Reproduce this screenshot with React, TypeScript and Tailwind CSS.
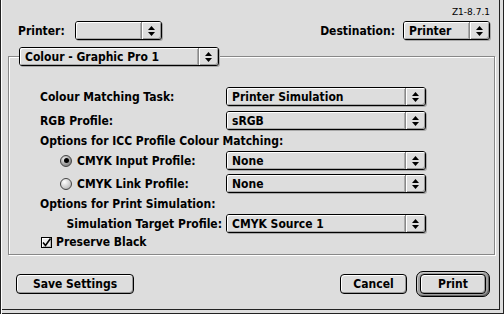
import React from 'react';

const font = "font-['DejaVu_Sans_Condensed','DejaVu_Sans',sans-serif]";

const Arrows: React.FC = () => (
    <svg width="7" height="10" viewBox="0 0 7 10" className="block">
        <polygon points="3.5,0 7,4 0,4" fill="#000" />
        <polygon points="0,6 7,6 3.5,10" fill="#000" />
    </svg>
);

interface PopupProps {
    label?: string;
    className: string;
}

const Popup: React.FC<PopupProps> = ({ label, className }) => (
    <div className={`flex h-[19px] shrink-0 rounded-[3px] border border-black bg-[#dddddd] shadow-[1px_1px_0_#a8a8a8] ${className}`}>
        <div className="flex flex-1 items-center rounded-l-[2px] pl-[5px] text-[12px] font-bold leading-none text-black shadow-[inset_1px_1px_0_#fff,inset_-1px_-1px_0_#aaa]">
            {label}
        </div>
        <div className="flex w-[20px] items-center justify-center rounded-r-[2px] border-l border-[#888] shadow-[inset_1px_1px_0_#fff,inset_-1px_-1px_0_#999]">
            <Arrows />
        </div>
    </div>
);

const Button: React.FC<{ children: React.ReactNode; className: string }> = ({ children, className }) => (
    <div className={`flex h-[20px] items-center justify-center rounded-[4px] border border-black bg-[#dddddd] text-[12px] font-bold leading-none shadow-[inset_1px_1px_0_#fff,inset_-1px_-1px_0_#999] ${className}`}>
        {children}
    </div>
);

const Radio: React.FC<{ on?: boolean }> = ({ on = false }) => (
    <div
        className={`flex h-[12px] w-[12px] shrink-0 items-center justify-center rounded-full border border-[#444] ${
            on
                ? 'bg-[radial-gradient(circle_at_35%_30%,#eee,#999_60%,#666)]'
                : 'bg-[radial-gradient(circle_at_35%_30%,#fff,#ccc_60%,#999)]'
        }`}
    >
        {on && <div className="h-[5px] w-[5px] rounded-full bg-black" />}
    </div>
);

const Checkbox: React.FC = () => (
    <div className="flex h-[11px] w-[11px] shrink-0 items-center justify-center border border-black bg-[#eeeeee] shadow-[inset_1px_1px_0_#fff,inset_-1px_-1px_0_#bbb]">
        <svg width="9" height="9" viewBox="0 0 9 9" className="block">
            <path d="M1 4.5 L3.5 7.5 L8.5 0.5" stroke="#000" strokeWidth="1.6" fill="none" />
        </svg>
    </div>
);

const App: React.FC = () => {
    return (
        <div
            className={`flex h-[314px] w-[504px] flex-col bg-[#dddddd] text-black ${font} shadow-[inset_1px_0_0_#222,inset_2px_0_0_#fff,inset_-1px_-1px_0_#222,inset_-4px_-4px_0_#dddddd,inset_-5px_-5px_0_#222]`}
        >
            {/* version */}
            <div className="flex h-[21px] justify-end pr-[14px] pt-[8px] text-[9px] leading-none font-['DejaVu_Sans',sans-serif]">
                Z1-8.7.1
            </div>

            {/* printer / destination */}
            <div className="flex h-[19px] items-center justify-between pl-[18px] pr-[14px] text-[12px] font-bold">
                <div className="flex items-center">
                    <span className="w-[57px]">Printer:</span>
                    <Popup className="w-[87px]" />
                </div>
                <div className="flex items-center">
                    <span className="mr-[8px]">Destination:</span>
                    <Popup label="Printer" className="w-[87px]" />
                </div>
            </div>

            {/* group box */}
            <div className="relative ml-[8px] mt-[16px] h-[199px] w-[487px] border border-[#888] pl-[31px] pt-[30px] text-[12px] font-bold shadow-[inset_1px_1px_0_#fff,1px_1px_0_#fff]">
                <Popup label="Colour - Graphic Pro 1" className="absolute left-[10px] top-[-10px] w-[200px]" />

                <div className="flex h-[19px] items-center">
                    <span className="w-[186px]">Colour Matching Task:</span>
                    <Popup label="Printer Simulation" className="w-[200px]" />
                </div>
                <div className="mt-[5px] flex h-[19px] items-center">
                    <span className="w-[186px]">RGB Profile:</span>
                    <Popup label="sRGB" className="w-[200px]" />
                </div>
                <div className="flex h-[21px] items-center">Options for ICC Profile Colour Matching:</div>
                <div className="flex h-[19px] items-center">
                    <div className="flex w-[186px] items-center gap-[5px] pl-[20px]">
                        <Radio on />
                        <span>CMYK Input Profile:</span>
                    </div>
                    <Popup label="None" className="w-[200px]" />
                </div>
                <div className="mt-[4px] flex h-[19px] items-center">
                    <div className="flex w-[186px] items-center gap-[5px] pl-[20px]">
                        <Radio />
                        <span>CMYK Link Profile:</span>
                    </div>
                    <Popup label="None" className="w-[200px]" />
                </div>
                <div className="flex h-[21px] items-center">Options for Print Simulation:</div>
                <div className="flex h-[19px] items-center">
                    <span className="w-[186px] pr-[4px] text-right">Simulation Target Profile:</span>
                    <Popup label="CMYK Source 1" className="w-[200px]" />
                </div>
                <div className="mt-[1px] flex h-[16px] items-center gap-[4px] pl-[1px]">
                    <Checkbox />
                    <span>Preserve Black</span>
                </div>
            </div>

            {/* buttons */}
            <div className="mt-[16px] flex h-[25px] items-center pl-[16px] pr-[14px]">
                <Button className="w-[118px]">Save Settings</Button>
                <div className="flex-1" />
                <Button className="w-[67px]">Cancel</Button>
                <div className="ml-[9px] flex h-[26px] w-[74px] items-center justify-center rounded-[7px] border border-black bg-[#a0a0a0] shadow-[inset_1px_1px_0_#ccc,inset_-1px_-1px_0_#666]">
                    <Button className="w-[66px]">Print</Button>
                </div>
            </div>
        </div>
    );
};

export default App;
